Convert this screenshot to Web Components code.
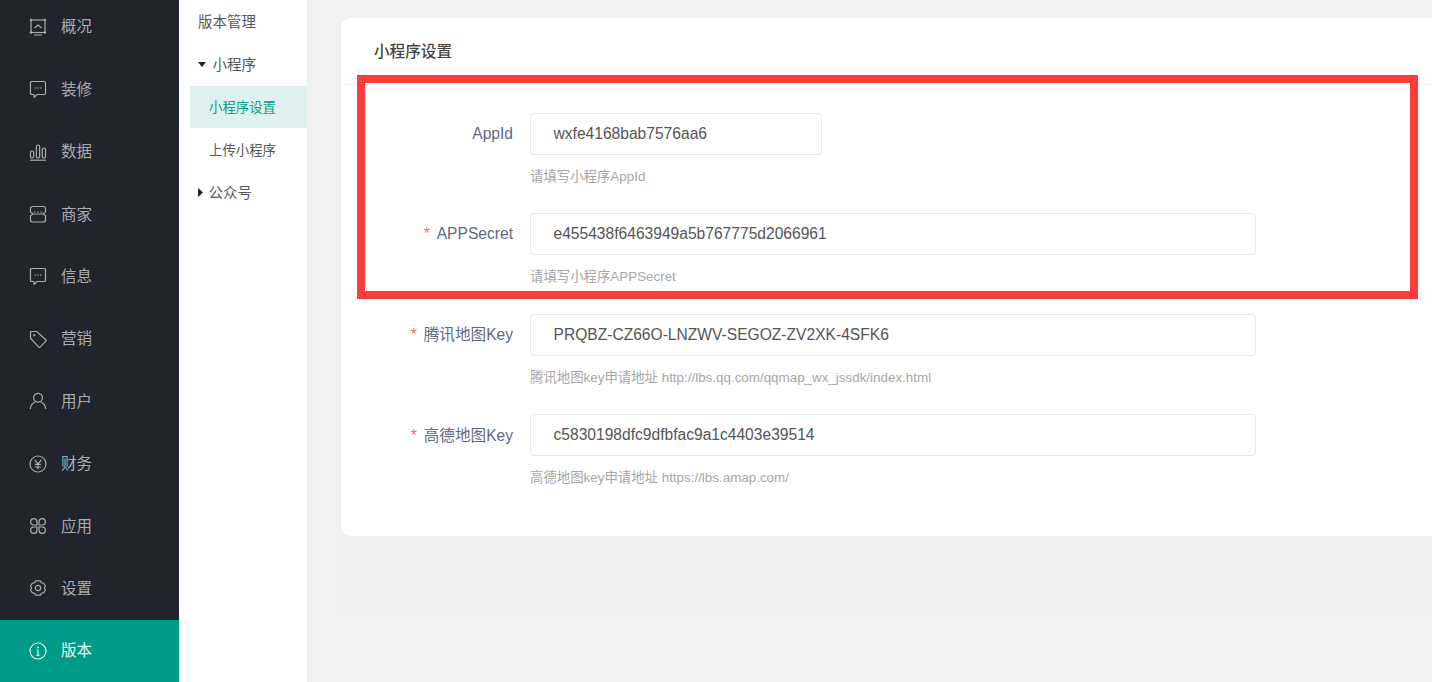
<!DOCTYPE html>
<html lang="zh">
<head>
<meta charset="utf-8">
<title>小程序设置</title>
<style>
    html, body { margin: 0; height: 100%; overflow: hidden; background: #f1f1f1; }
    body { font-family: "Liberation Sans", "Noto Sans CJK SC", sans-serif; }
</style>
</head>
<body>
<app-shell>
    <main-nav slot="nav">
        <nav-item icon="overview">概况</nav-item>
        <nav-item icon="chat">装修</nav-item>
        <nav-item icon="bars">数据</nav-item>
        <nav-item icon="shop">商家</nav-item>
        <nav-item icon="chat">信息</nav-item>
        <nav-item icon="tag">营销</nav-item>
        <nav-item icon="user">用户</nav-item>
        <nav-item icon="yen">财务</nav-item>
        <nav-item icon="apps">应用</nav-item>
        <nav-item icon="gear">设置</nav-item>
        <nav-item icon="info" active>版本</nav-item>
    </main-nav>
    <sub-nav slot="subnav">
        <sub-item>版本管理</sub-item>
        <sub-item arrow="down">小程序</sub-item>
        <sub-item child active>小程序设置</sub-item>
        <sub-item child>上传小程序</sub-item>
        <sub-item arrow="right">公众号</sub-item>
    </sub-nav>
    <settings-card heading="小程序设置">
        <form-row label="AppId" value="wxfe4168bab7576aa6" short>请填写小程序AppId</form-row>
        <form-row label="APPSecret" value="e455438f6463949a5b767775d2066961" required>请填写小程序APPSecret</form-row>
        <form-row label="腾讯地图Key" value="PRQBZ-CZ66O-LNZWV-SEGOZ-ZV2XK-4SFK6" required>腾讯地图key申请地址 http://lbs.qq.com/qqmap_wx_jssdk/index.html</form-row>
        <form-row label="高德地图Key" value="c5830198dfc9dfbfac9a1c4403e39514" required>高德地图key申请地址 https://lbs.amap.com/</form-row>
    </settings-card>
</app-shell>

<script>
const FONT = '"Liberation Sans", "Noto Sans CJK SC", sans-serif';

const ICONS = {
    overview: '<rect x="2" y="2" width="14" height="12.5"/><path d="M5.5 10l3.5-3 3.5 3M5 17h8"/><g fill="currentColor" stroke="none"><circle cx="2" cy="2" r="1.2"/><circle cx="16" cy="2" r="1.2"/><circle cx="2" cy="14.5" r="1.2"/><circle cx="16" cy="14.5" r="1.2"/></g>',
    chat: '<path d="M2.5 1.5h13a1 1 0 0 1 1 1v11a1 1 0 0 1-1 1H8l-2.8 2.7-.4-2.7H2.5a1 1 0 0 1-1-1v-11a1 1 0 0 1 1-1z"/><path d="M5.5 8h1.6M8.3 8h1.6M11.1 8h1.6"/>',
    bars: '<rect x="1.5" y="8" width="3.2" height="7" rx="1.6"/><rect x="7.4" y="2" width="3.2" height="13" rx="1.6"/><rect x="13.3" y="5" width="3.2" height="10" rx="1.6"/><path d="M1 17.2h16"/>',
    shop: '<path d="M1.500 7.500V3.500a2 2 0 0 1 2-2h11a2 2 0 0 1 2 2v4"/><path d="M1.500 7.500c2 0 2 1 2 1.500s-2 1.500-2 1.500V15a2 2 0 0 0 2 2h11a2 2 0 0 0 2-2v-4.500s-2-1-2-1.500 0-1.500 2-1.500"/><path d="M3.500 9h11M5 7h1.500M8.200 7h1.600M11.500 7h1.500"/>',
    tag: '<path d="M1.500 2.500a1 1 0 0 1 1-1h5.300l9 8.200a1 1 0 0 1 0 1.500l-5.700 5.900a1 1 0 0 1-1.400 0L1.500 8.200z"/><circle cx="5.300" cy="5.300" r="1.100" fill="currentColor" stroke="none"/>',
    user: '<circle cx="9" cy="5.800" r="4.400"/><path d="M1.300 17c.3-3.900 2.600-6.100 5-7M16.700 17c-.3-3.900-2.600-6.100-5-7"/>',
    yen: '<circle cx="9" cy="9" r="8"/><path d="M5.800 4.800L9 9l3.200-4.200M5.800 9.300h6.400M5.800 12h6.400M9 9v5.200"/>',
    apps: '<path d="M8 8H4.600A3.200 3.200 0 1 1 8 4.600zM10 8h3.400A3.200 3.200 0 1 0 10 4.600zM8 10H4.600A3.200 3.200 0 1 0 8 13.400zM10 10h3.400a3.200 3.200 0 1 1-3.400 3.400z"/>',
    gear: '<path d="M6.600 1.800h4.800l1 2 2.200.2 1.900 3-1.200 2 1.200 2-1.900 3-2.200.2-1 2H6.600l-1-2-2.200-.2-1.900-3 1.200-2-1.200-2 1.900-3 2.200-.2z" stroke-linejoin="round"/><circle cx="9" cy="9" r="2.700"/>',
    info: '<circle cx="9" cy="9" r="8"/><path d="M9 8v5.300M7.600 13.300h2.800M7.800 8H9"/><circle cx="9" cy="5.300" r=".9" fill="currentColor" stroke="none"/>'
};

class AppShell extends HTMLElement {
    constructor() {
        super();
        this.attachShadow({mode: 'open'}).innerHTML = `
<style>
    :host { display: flex; width: 1432px; height: 682px; overflow: hidden; font-family: ${FONT}; }
    main { flex: 1; min-width: 0; padding: 18px 0 0 33.500px; display: flex; flex-direction: column; }
    .below { height: 73px; background: #f0f0f0; }
</style>
<slot name="nav"></slot>
<slot name="subnav"></slot>
<main><slot></slot><div class="below"></div></main>`;
    }
}

class MainNav extends HTMLElement {
    constructor() {
        super();
        this.attachShadow({mode: 'open'}).innerHTML = `
<style>
    :host { display: flex; flex-direction: column; justify-content: flex-end; flex: 0 0 179px; height: 682px; background: #21242c; overflow: hidden; }
</style>
<slot></slot>`;
    }
}

class NavItem extends HTMLElement {
    constructor() {
        super();
        let icon = ICONS[this.getAttribute('icon')];
        this.attachShadow({mode: 'open'}).innerHTML = `
<style>
    :host { display: flex; align-items: center; flex: 0 0 62.4px; padding-left: 28.500px; gap: 14.500px; color: #a9abae; font-size: 15.500px; }
    :host([active]) { background: #009b88; color: #e6f6f3; }
    svg { width: 18px; height: 18px; flex: none; fill: none; stroke: currentColor; stroke-width: 1.200; }
    span { margin-bottom: 3px; }
</style>
<svg viewBox="0 0 18 18">${icon}</svg>
<span><slot></slot></span>`;
    }
}

class SubNav extends HTMLElement {
    constructor() {
        super();
        this.attachShadow({mode: 'open'}).innerHTML = `
<style>
    :host { display: flex; flex-direction: column; flex: 0 0 128px; background: #fff; padding: 0 0 0 11px; box-sizing: border-box; }
</style>
<slot></slot>`;
    }
}

class SubItem extends HTMLElement {
    constructor() {
        super();
        let arrow = this.getAttribute('arrow');
        let glyph = '';
        if (arrow == 'down') glyph = '<svg width="8" height="5" viewBox="0 0 8 5"><path d="M0 0h8L4 5z"/></svg>';
        if (arrow == 'right') glyph = '<svg width="5" height="9" viewBox="0 0 5 9"><path d="M0 0l5 4.500L0 9z"/></svg>';
        this.attachShadow({mode: 'open'}).innerHTML = `
<style>
    :host { display: flex; align-items: center; height: 42.750px; padding-left: 8px; color: #55585c; font-size: 14.500px; gap: 6.500px; }
    :host([arrow="right"]) { gap: 5.500px; }
    :host([child]) { padding-left: 19px; font-size: 13.400px; }
    :host([active]) { background: #dff1ee; color: #0a9d8a; }
    svg { flex: none; fill: #222; }
    span { margin-bottom: 2px; }
</style>
${glyph}<span><slot></slot></span>`;
    }
}

class SettingsCard extends HTMLElement {
    constructor() {
        super();
        this.attachShadow({mode: 'open'}).innerHTML = `
<style>
    :host { display: block; flex: none; position: relative; height: 518px; background: #fff; border-radius: 9px 0 0 9px; }
    h2 { margin: 0; height: 67px; box-sizing: border-box; padding: 0 0 0 33.500px; line-height: 67px; font-size: 15.600px; font-weight: 500; color: #444; border-bottom: 1px solid #f6f6f6; }
    .form { padding-top: 27.700px; display: flex; flex-direction: column; gap: 58.500px; }
    /* red annotation drawn over the screenshot */
    .mark { position: absolute; left: 16px; top: 56.700px; width: 1061px; height: 224.600px; box-sizing: border-box; border: 8px solid #ff3b3b; pointer-events: none; }
</style>
<h2></h2>
<div class="form"><slot></slot></div>
<div class="mark"></div>`;
        this.shadowRoot.querySelector('h2').textContent = this.getAttribute('heading');
    }
}

class FormRow extends HTMLElement {
    constructor() {
        super();
        this.attachShadow({mode: 'open'}).innerHTML = `
<style>
    :host { display: grid; grid-template-columns: 172.500px 726px; grid-template-rows: 42px auto; column-gap: 17px; row-gap: 14px; height: 42px; }
    label { justify-self: end; align-self: center; font-size: 15.600px; color: #606a82; }
    .req { color: #f56c6c; margin-right: 7px; }
    .input { box-sizing: border-box; height: 42px; border: 1px solid #e8e8e8; border-radius: 4px; padding-left: 22.500px; line-height: 40px; font-size: 15.600px; color: #555; }
    :host([short]) .input { width: 292px; }
    .hint { grid-column: 2; font-size: 13.400px; line-height: 16px; color: #a6a6a6; white-space: nowrap; }
</style>
<label></label>
<div class="input"></div>
<div class="hint"><slot></slot></div>`;
        let label = this.shadowRoot.querySelector('label');
        let text = this.getAttribute('label');
        if (this.hasAttribute('required')) label.innerHTML = '<span class="req">*</span>';
        label.append(text);
        // the CJK font sits lower in its line box
        if (/[^\x00-\x7f]/.test(text)) label.style.marginBottom = '3px';
        this.shadowRoot.querySelector('.input').textContent = this.getAttribute('value');
    }
}

customElements.define('app-shell', AppShell);
customElements.define('main-nav', MainNav);
customElements.define('nav-item', NavItem);
customElements.define('sub-nav', SubNav);
customElements.define('sub-item', SubItem);
customElements.define('settings-card', SettingsCard);
customElements.define('form-row', FormRow);
</script>
</body>
</html>
